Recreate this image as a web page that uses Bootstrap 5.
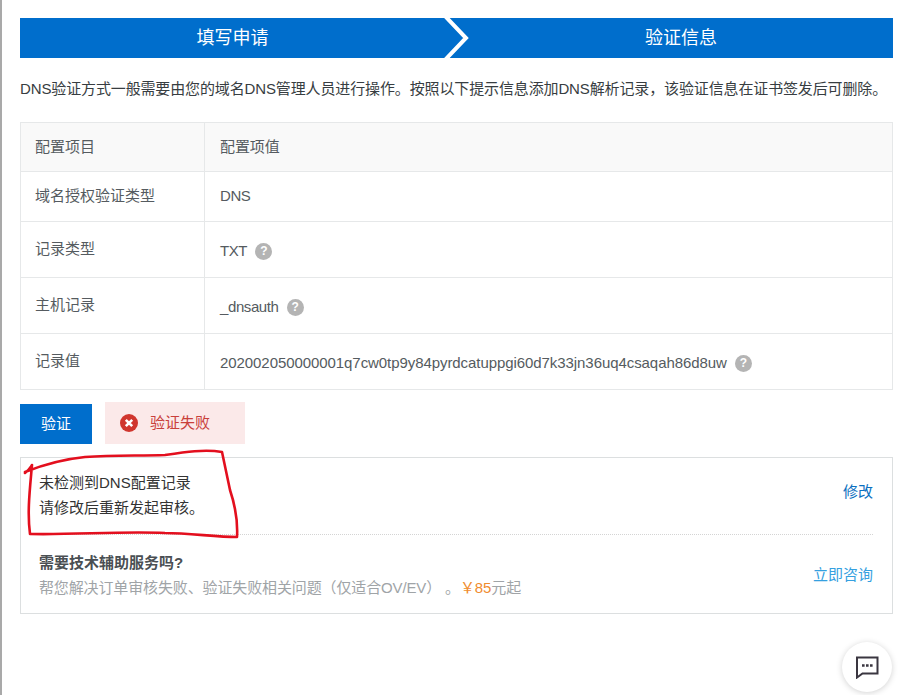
<!DOCTYPE html>
<html lang="zh-CN">

<head>
    <meta charset="UTF-8">
    <meta name="viewport" content="width=device-width, initial-scale=1.0">
    <title>验证信息</title>
    <link href="https://cdn.jsdelivr.net/npm/bootstrap@5.3.0/dist/css/bootstrap.min.css" rel="stylesheet">
    <style>
        html, body {
            height: 100%;
            overflow: hidden;
        }

        body {
            font-family: "Liberation Sans", "Noto Sans CJK SC", sans-serif;
            font-size: 15px;
            color: #373d41;
            background: #fff;
        }

        .page-wrap {
            position: relative;
            height: 695px;
            padding: 18px 18px 0 18px;
            border-left: 2px solid #a9a9a9;
        }

        .step-bar {
            height: 40px;
            background: #006ecc;
            color: #fff;
            font-size: 18px;
        }

        .step-item {
            line-height: 41px;
            text-align: center;
        }

        .step-first {
            width: 425px;
        }

        .step-second {
            width: 448px;
            padding-left: 24px;
        }

        .step-arrow {
            position: absolute;
            left: 423px;
            top: 0;
        }

        .intro-text {
            margin: 21px 0 23px;
            line-height: 20px;
            white-space: nowrap;
            letter-spacing: -0.13px;
        }

        .cfg-table {
            width: 873px;
            border: 1px solid #e6e8e9;
            margin-bottom: 14px;
        }

        .cfg-row {
            display: flex;
            align-items: center;
            border-bottom: 1px solid #e6e8e9;
            height: 56px;
            color: #555b60;
        }

        .cfg-row:last-child {
            height: 55px;
            border-bottom: 0;
        }

        .cfg-head {
            height: 49px;
            background: #f9f9f9;
        }

        .cfg-short {
            height: 50px;
        }

        .cfg-key {
            flex: 0 0 184px;
            align-self: stretch;
            display: flex;
            align-items: center;
            padding-left: 14px;
            border-right: 1px solid #e6e8e9;
        }

        .cfg-val {
            padding-left: 15px;
            display: flex;
            align-items: center;
            gap: 8px;
            letter-spacing: -0.07px;
        }

        .cfg-tall {
            padding-top: 4px;
        }

        .cfg-tight {
            letter-spacing: -0.4px;
        }

        .help-dot {
            width: 17px;
            height: 17px;
            border-radius: 50%;
            background: #b4b4b4;
            color: #fff;
            font-size: 12px;
            font-weight: bold;
            line-height: 17px;
            text-align: center;
        }

        .btn-verify {
            width: 72px;
            height: 40px;
            padding: 0;
            border: 0;
            border-radius: 0;
            background: #006ecc;
            color: #fff;
            font-size: 15px;
        }

        .fail-box {
            width: 140px;
            height: 42px;
            margin-top: -2px;
            margin-left: 13px;
            padding-left: 15px;
            gap: 12px;
            background: #fbe9e9;
            color: #c9403a;
        }

        .result-box {
            width: 873px;
            height: 157px;
            margin-top: 13px;
            padding: 0 19px 0 18px;
            border: 1px solid #dcdfe0;
        }

        .result-top {
            height: 77px;
            border-bottom: 1px dotted #d4d4d4;
            line-height: 25px;
            color: #333;
            padding-top: 12px;
        }

        .link-edit {
            color: #0b6fc0;
            text-decoration: none;
            margin-top: 9px;
        }

        .link-ask {
            color: #35a0e0;
            text-decoration: none;
            margin-top: -2px;
        }

        .result-bottom {
            padding-top: 15px;
            line-height: 25px;
        }

        .ask-title {
            font-weight: bold;
            color: #4a4f53;
        }

        .ask-desc {
            color: #a0a4a7;
            letter-spacing: -0.13px;
        }

        .ask-price {
            color: #f08c2e;
        }

        .red-mark {
            position: absolute;
            left: -2px;
            top: 0;
            pointer-events: none;
        }

        .chat-btn {
            position: absolute;
            left: 840px;
            top: 642px;
            width: 50px;
            height: 50px;
            border-radius: 50%;
            background: #fff;
            box-shadow: 0 1px 6px rgba(0, 0, 0, 0.18);
        }
    </style>
</head>

<body>
    <div class="page-wrap">
        <div class="step-bar d-flex position-relative">
            <div class="step-item step-first">填写申请</div>
            <div class="step-item step-second">验证信息</div>
            <svg class="step-arrow" width="26" height="40" viewBox="0 0 26 40">
                <polyline points="2,-2 23,20 2,42" fill="none" stroke="#fff" stroke-width="4" />
            </svg>
        </div>

        <p class="intro-text">DNS验证方式一般需要由您的域名DNS管理人员进行操作。按照以下提示信息添加DNS解析记录，该验证信息在证书签发后可删除。</p>

        <div class="cfg-table">
            <div class="cfg-row cfg-head">
                <div class="cfg-key">配置项目</div>
                <div class="cfg-val">配置项值</div>
            </div>
            <div class="cfg-row cfg-short">
                <div class="cfg-key">域名授权验证类型</div>
                <div class="cfg-val cfg-tight">DNS</div>
            </div>
            <div class="cfg-row">
                <div class="cfg-key">记录类型</div>
                <div class="cfg-val cfg-tall cfg-tight">TXT <span class="help-dot">?</span></div>
            </div>
            <div class="cfg-row">
                <div class="cfg-key">主机记录</div>
                <div class="cfg-val cfg-tall cfg-tight">_dnsauth <span class="help-dot">?</span></div>
            </div>
            <div class="cfg-row">
                <div class="cfg-key">记录值</div>
                <div class="cfg-val cfg-tall">202002050000001q7cw0tp9y84pyrdcatuppgi60d7k33jn36uq4csaqah86d8uw <span class="help-dot">?</span></div>
            </div>
        </div>

        <div class="d-flex">
            <button class="btn btn-verify" type="button">验证</button>
            <div class="fail-box d-flex align-items-center">
                <svg width="18" height="18" viewBox="0 0 18 18">
                    <circle cx="9" cy="9" r="9" fill="#d0362e" />
                    <path d="M5.8 5.8l6.4 6.400M12.200 5.800l-6.400 6.400" stroke="#fff" stroke-width="2.600" />
                </svg>
                <span>验证失败</span>
            </div>
        </div>

        <div class="result-box">
            <div class="result-top d-flex justify-content-between align-items-start">
                <div>未检测到DNS配置记录<br>请修改后重新发起审核。</div>
                <a class="link-edit" href="#">修改</a>
            </div>
            <div class="result-bottom d-flex justify-content-between align-items-center">
                <div>
                    <div class="ask-title">需要技术辅助服务吗?</div>
                    <div class="ask-desc">帮您解决订单审核失败、验证失败相关问题（仅适合OV/EV） 。<span class="ask-price">￥85</span>元起</div>
                </div>
                <a class="link-ask" href="#">立即咨询</a>
            </div>
        </div>

        <svg class="red-mark" width="260" height="560" viewBox="0 0 260 560">
            <path d="M25 473 C29 470 30 468 32 465 M25 472 C45 464 65 459 85 457 C115 455 140 456 165 455 C185 452 205 449 222 452 C224 462 227 476 230 490 C235 505 238 520 237 537 C215 537 190 533 165 533 C120 531 75 535 30 534 C27 512 30 488 32 465" fill="none" stroke="#e30f1e" stroke-width="2.600" stroke-linecap="round" stroke-linejoin="round" />
        </svg>

        <div class="chat-btn d-flex align-items-center justify-content-center">
            <svg width="24" height="24" viewBox="0 0 24 24">
                <path d="M2 2.500H22.500V18.500H7.500L2 22.500Z" fill="#fff" stroke="#3a3640" stroke-width="2" />
                <path d="M7 10.500H9.600M11 10.500H13.600M15 10.500H17.600" stroke="#3a3640" stroke-width="2.600" />
            </svg>
        </div>
    </div>

    <script src="https://cdn.jsdelivr.net/npm/bootstrap@5.3.0/dist/js/bootstrap.bundle.min.js"></script>
</body>

</html>
